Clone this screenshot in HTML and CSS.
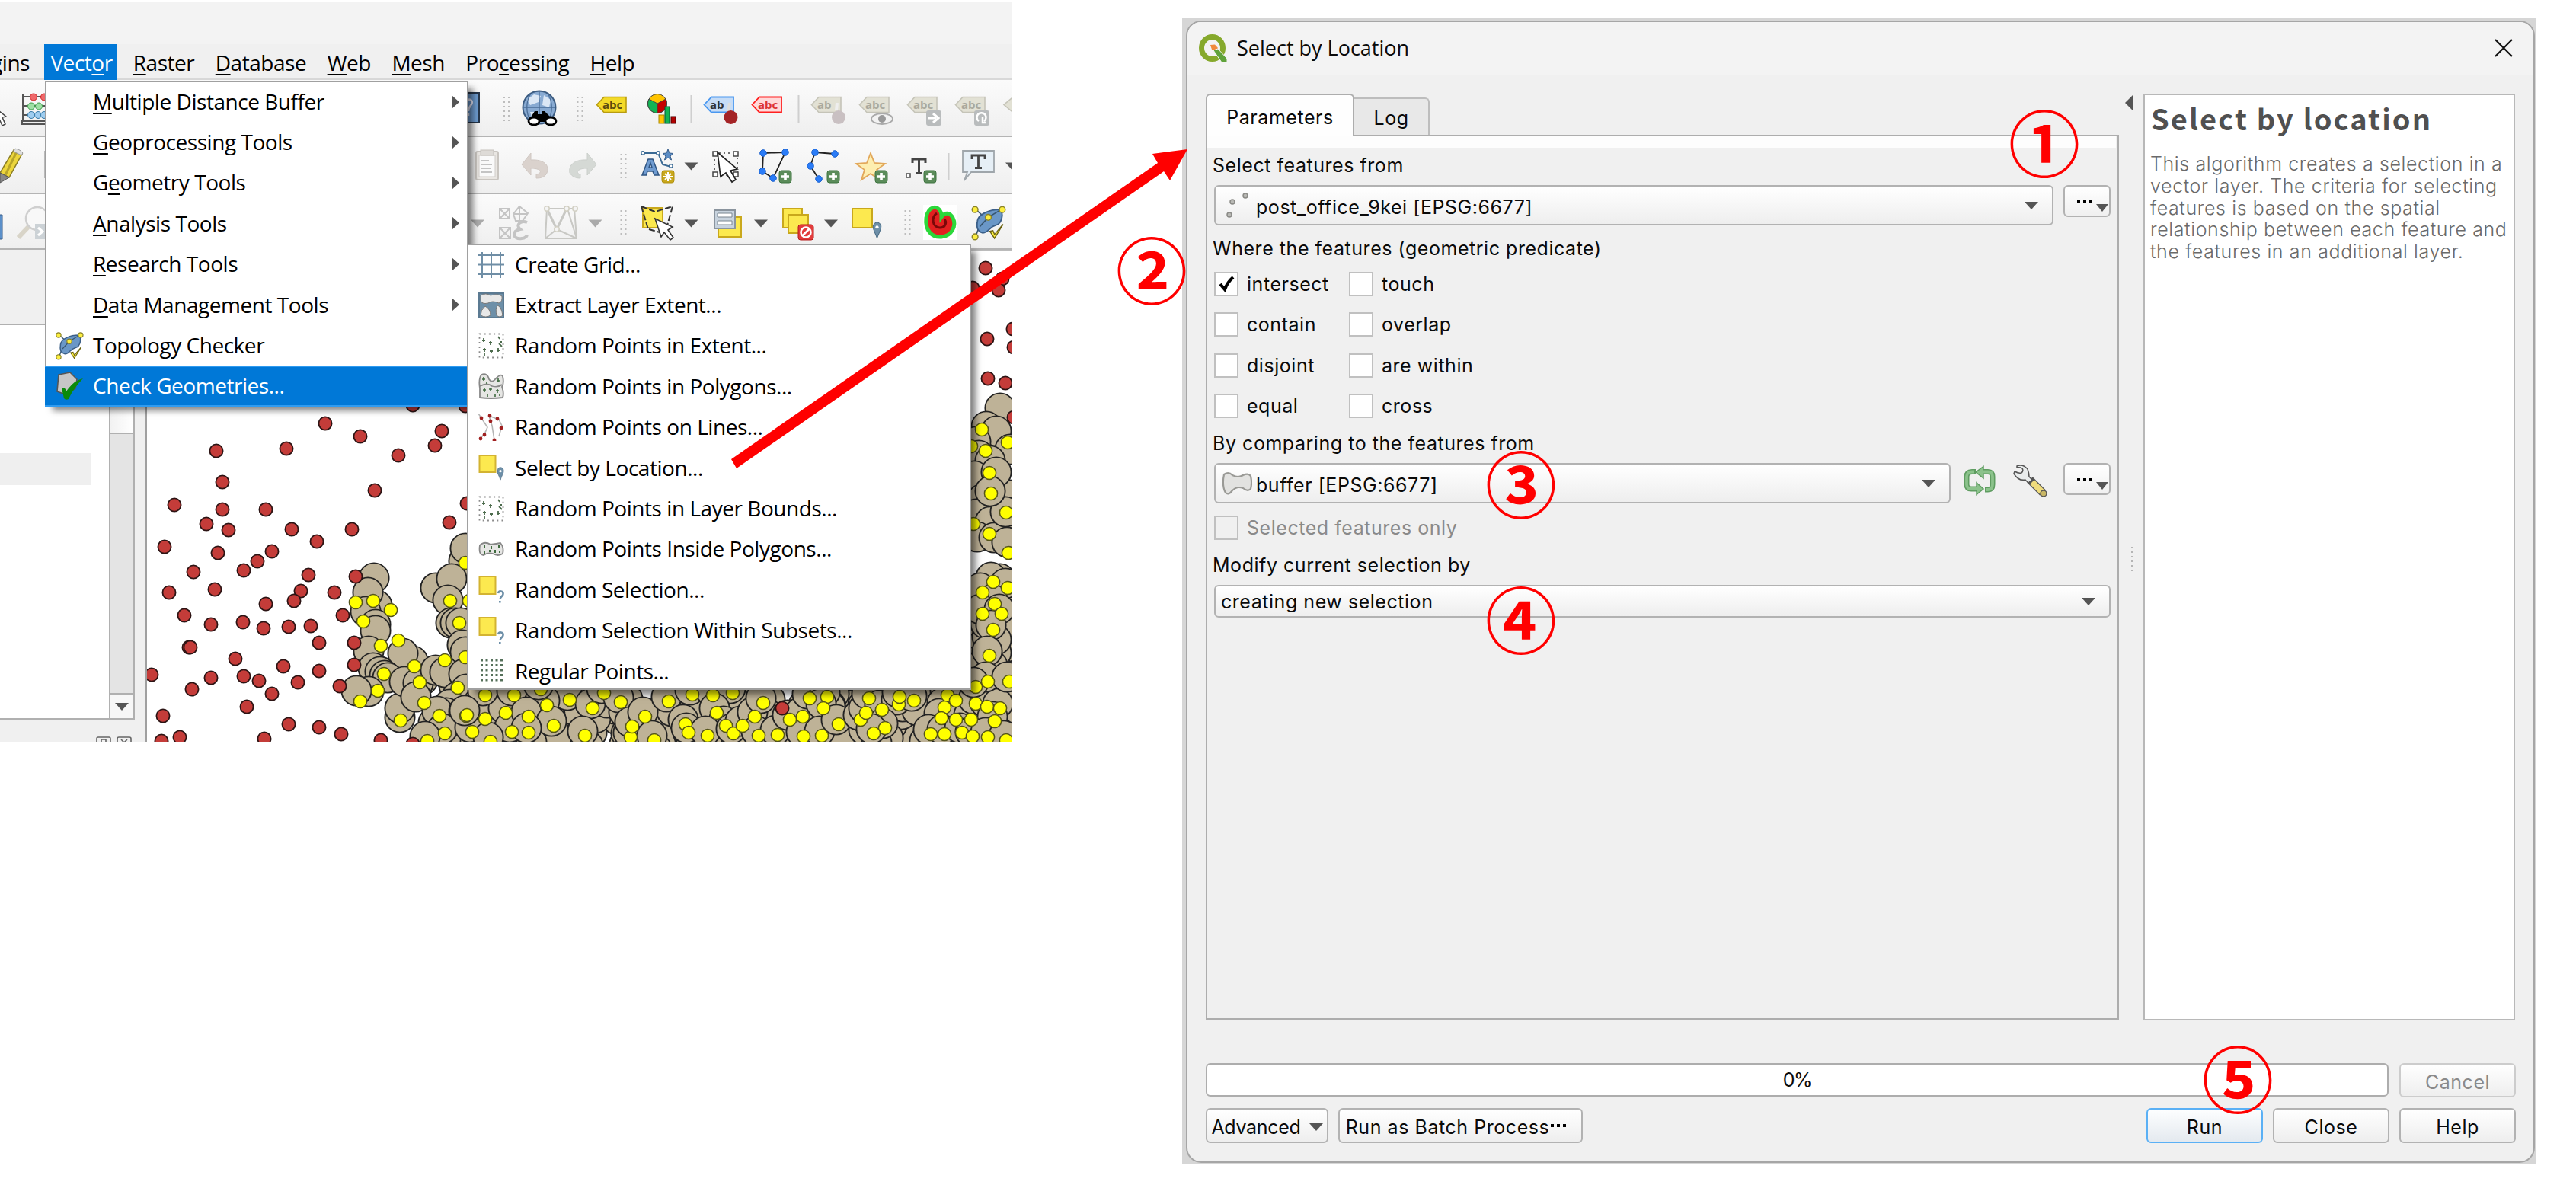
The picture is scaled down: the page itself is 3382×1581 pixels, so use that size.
FILE: index.html
```
<!DOCTYPE html>
<html lang="en">
<head>
<meta charset="utf-8">
<title>Select by Location</title>
<link rel="stylesheet" href="styles.css">
</head>
<body>
<svg class="defs" width="0" height="0">
  <defs>
    <marker id="m-red" markerUnits="userSpaceOnUse" markerWidth="22" markerHeight="22" refX="11" refY="11"><circle cx="11" cy="11" r="8.6" fill="#c43c39" stroke="#2c1414" stroke-width="1.8"/></marker>
    <marker id="m-yel" markerUnits="userSpaceOnUse" markerWidth="22" markerHeight="22" refX="11" refY="11"><circle cx="11" cy="11" r="8.6" fill="#ffff00" stroke="#54541a" stroke-width="1.5"/></marker>
    <marker id="m-buf" markerUnits="userSpaceOnUse" markerWidth="44" markerHeight="44" refX="22" refY="22"><circle cx="22" cy="22" r="19.6" fill="#beb297" stroke="#232323" stroke-width="1.9"/></marker>
    <symbol id="topo" viewBox="0 0 46 46">
      <path d="M7 6 L16 14 M40 5 L23 16 M23 16 L12 26 M12 26 L7 40" fill="none" stroke="#38566e" stroke-width="1.6"/>
      <path d="M9 21 C10 12 24 6 38 6 C43 10 41 24 33 26 C24 28 24 36 16 36 C8 34 8 28 9 21Z" fill="#6a97c7" stroke="#3b5f88" stroke-width="1.8"/>
      <path d="M38 7 L23 16 L12 28" fill="none" stroke="#38566e" stroke-width="1.6"/>
      <path d="M25 34 L29 33 L31 38 L42 25 L31 43 Z" fill="#fcee40" stroke="#6b6210" stroke-width="1.3"/>
      <g fill="#fcee40" stroke="#8a8228" stroke-width="1.4"><circle cx="6" cy="6" r="3.8"/><circle cx="41" cy="6" r="3.8"/><circle cx="23" cy="16" r="3.8"/><circle cx="6" cy="41" r="3.8"/></g>
    </symbol>
    <symbol id="plus" viewBox="0 0 18 18"><rect x="1" y="1" width="16" height="16" rx="3" fill="#5b8c5a" stroke="#3f7440"/><path d="M9 4v10M4 9h10" stroke="#fff" stroke-width="3.6"/></symbol>
    <symbol id="pts-ext" viewBox="0 0 34 34">
      <rect x="1.5" y="1.5" width="31" height="31" fill="none" stroke="#8b8b8b" stroke-width="1.8" stroke-dasharray="2 4.2"/>
      <path d="M7 7v5M5 10h4M16 11v5M14 13h4M26 5l2 3M27 14l4 4M8 20v5M6 22h4M17 22v5M15 24h4M26 20v5M24 23h5M8 27v3M28 12h3" stroke="#4c6b4c" stroke-width="1.8"/>
    </symbol>
    <symbol id="sel-q" viewBox="0 0 34 38"><rect x="1.5" y="2" width="21" height="23" fill="#fce94f" stroke="#d3b331" stroke-width="2"/><path d="M26 24c1-4 7-3 6.500 1c0 3-4 3-4 7M28.300 34v2.500" fill="none" stroke="#6d8fa8" stroke-width="2.600"/></symbol>
    <symbol id="pin" viewBox="0 0 12 22"><path d="M6 21C4 14 1 11 1 6.500A5 5.500 0 0 1 11 6.500C11 11 8 14 6 21Z" fill="#6d8fa8" stroke="#4e7089"/><circle cx="6" cy="7" r="2" fill="#fff"/></symbol>
  </defs>
</svg>

<main class="sheet">
  <section class="qgis">
    <div class="winbar"></div>
    <nav class="menubar">
      <span class="cut">gins</span>
      <span class="open">Vect<u>o</u>r</span>
      <span><u>R</u>aster</span><span><u>D</u>atabase</span><span><u>W</u>eb</span><span><u>M</u>esh</span><span>Pro<u>c</u>essing</span><span><u>H</u>elp</span>
    </nav>

    <div class="toolbar">
      <svg width="614" height="74" viewBox="0 105 614 74">
        <path d="M-6 142 L-6 160 L-1 156 L3 165 L7 163 L3 154 L8 153Z" fill="#fff" stroke="#444" stroke-width="1.5"/>
        <path d="M30 123v37M30 127h40M30 139h40M30 151h40M29 159h40v4h-40z" fill="none" stroke="#555" stroke-width="2"/>
        <g fill="#f0696b" stroke="#c22"><circle cx="44" cy="127.500" r="4.500"/><circle cx="58" cy="127.500" r="4.500"/></g>
        <g fill="#9fe0a5" stroke="#3b9b48"><circle cx="41" cy="139.500" r="4.500"/><circle cx="51" cy="139.500" r="4.500"/></g>
        <g fill="#9fcdf0" stroke="#3a7ca8"><circle cx="41" cy="151" r="4.500"/><circle cx="50" cy="151" r="4.500"/><circle cx="58" cy="151" r="4.500"/></g>
      </svg>
      <svg width="61" height="74" viewBox="614 105 61 74">
        <rect x="600" y="122" width="29" height="39" fill="#6d9bcf" stroke="#26364a" stroke-width="2"/>
        <path d="M612 134c3-6 10-3 7 3c-2 3-4 4-4 9M615 149v3" fill="none" stroke="#eef" stroke-width="2.500"/>
        <path d="M662 127v33M668 127v33" stroke="#bdbdbd" stroke-width="2" stroke-dasharray="2 4"/>
      </svg>
      <svg width="70" height="74" viewBox="675 105 70 74">
        <circle cx="708" cy="141" r="21.500" fill="#88aad2" stroke="#3b5b80" stroke-width="2"/>
        <path d="M692 131l9-7 9 2-3 8-11 4zM714 125l9 6-2 10-9-3zM696 147l8 0 2 9-6 3z" fill="#dbe7f5"/>
        <path d="M687 141h42M708 120v42M697 123c-7 10-7 26 0 36M719 123c7 10 7 26 0 36" fill="none" stroke="#4a6d98" stroke-width="1.300"/>
        <path d="M693 160L702 146H706V150H711V146H715L729 160Z" fill="#000"/>
        <ellipse cx="701" cy="159" rx="7" ry="5" fill="#fff" stroke="#000" stroke-width="2.800"/><ellipse cx="723" cy="159" rx="7" ry="5" fill="#fff" stroke="#000" stroke-width="2.800"/>
      </svg>
      <svg width="95" height="74" viewBox="745 105 95 74">
        <path d="M758.500 127v33M764.500 127v33" stroke="#bdbdbd" stroke-width="2" stroke-dasharray="2 4"/>
        <path d="M793 127.500H822V147.500H793L783.500 137.500Z" fill="#f3da28" stroke="#b89c10" stroke-width="1.600"/>
        <text class="abc" x="791" y="143" fill="#5a4c10">abc</text>
      </svg>
      <svg width="77" height="74" viewBox="840 105 77 74">
        <circle cx="863" cy="136" r="12.500" fill="#ffc400" stroke="#444" stroke-width="1"/>
        <path d="M863 136L852 130A12.500 12.500 0 0 0 863 148.500Z" fill="#12b454" stroke="#444"/><path d="M863 136L874 130A12.500 12.500 0 0 1 863 148.500Z" fill="#c40000" stroke="#444"/>
        <rect x="865" y="151" width="7" height="11" fill="#ffc400" stroke="#a80"/><rect x="873" y="140" width="6" height="22" fill="#12b454" stroke="#053"/><rect x="881" y="153" width="6" height="9" fill="#b00000" stroke="#400"/>
        <path d="M907.500 125v36" stroke="#cfcfcf" stroke-width="2"/>
      </svg>
      <svg width="64" height="74" viewBox="917 105 64 74">
        <path d="M934 127.500H963V147.500H934L924.500 137.500Z" fill="#c6dcf6" stroke="#4a98f0" stroke-width="1.800"/>
        <text class="abc" x="932" y="143" fill="#333">ab</text>
        <path d="M958 135l-2 12" stroke="#ddd" stroke-width="4"/><circle cx="959.500" cy="154" r="9" fill="#a42326"/>
      </svg>
      <svg width="77" height="74" viewBox="981 105 77 74">
        <path d="M997 127.500H1026V147.500H997L987.500 137.500Z" fill="#ffd9d9" stroke="#ff2020" stroke-width="1.800"/>
        <text class="abc" x="995" y="143" fill="#d33">abc</text>
        <path d="M1048.500 125v36" stroke="#cfcfcf" stroke-width="2"/>
      </svg>
      <svg width="271" height="74" viewBox="1058 105 271 74">
        <g fill="#e2e1d4" stroke="#c5c4b8" stroke-width="1.600"><path d="M1075 127.500H1104V147.500H1075L1065.500 137.500Z"/><path d="M1138 127.500H1167V147.500H1138L1128.500 137.500Z"/><path d="M1201 127.500H1230V147.500H1201L1191.500 137.500Z"/><path d="M1264 127.500H1293V147.500H1264L1254.500 137.500Z"/><path d="M1330 127.500L1318 137.500L1330 147.500Z"/></g>
        <g class="abc" fill="#aaa99e"><text x="1073" y="143">ab</text><text x="1136" y="143">abc</text><text x="1199" y="143">abc</text><text x="1262" y="143">abc</text></g>
        <path d="M1099 135l-1 10" stroke="#eee" stroke-width="4"/><circle cx="1101" cy="154" r="9" fill="#c9c0c2"/>
        <ellipse cx="1158" cy="156" rx="14" ry="7" fill="#f2f2f2" stroke="#aaa" stroke-width="2"/><circle cx="1158" cy="156" r="5" fill="#999"/>
        <rect x="1216" y="145" width="20" height="20" rx="3" fill="#b9bcbd"/><path d="M1219 155h10M1225 149l7 6-7 6" stroke="#fff" stroke-width="3" fill="none"/>
        <rect x="1279" y="145" width="20" height="20" rx="3" fill="#b9bcbd"/><path d="M1285 159a6 6 0 1 1 7 0M1290 154v7h5" stroke="#fff" stroke-width="2.500" fill="none"/>
      </svg>
    </div>

    <div class="toolbar">
      <svg width="614" height="74" viewBox="0 179 614 74">
        <path d="M0 226L18 196L29 201L12 232Z" fill="#ecd63d" stroke="#8a7d26" stroke-width="1.500"/><path d="M6 231L22 198" stroke="#b8a52a" stroke-width="3"/><path d="M18 196q2-3 6-1t6 5l-2 3-10-5z" fill="#ddd" stroke="#999"/><path d="M0 226l12 6L0 239z" fill="#888" stroke="#555"/>
        <path d="M64 198h-5v34h5" fill="none" stroke="#bbb" stroke-width="2"/>
      </svg>
      <svg width="61" height="74" viewBox="614 179 61 74">
        <rect x="625" y="198" width="29" height="37" rx="2" fill="#e9e6e2" stroke="#c9c5c0" stroke-width="2"/><path d="M629 203h21v28h-21z" fill="#fafafa" stroke="#d0ccc8"/><rect x="631" y="196" width="17" height="7" fill="#dedbd7" stroke="#c5c1bc"/><path d="M632 210h10M632 215h14M632 220h12M632 225h14" stroke="#c4c4c4" stroke-width="2"/>
      </svg>
      <svg width="130" height="74" viewBox="675 179 130 74">
        <path d="M685 215L697 200V209C714 208 722 216 718 226C716 231 711 233 704 233V228C712 227 712 220 697 220V229Z" fill="#dad2cd" stroke="#d0c8c3"/>
        <path d="M783 215L771 200V209C754 208 746 216 748 226C751 231 756 233 762 233V228C756 227 756 220 771 220V229Z" fill="#d5d9d5" stroke="#cbcfcb"/>
      </svg>
      <svg width="120" height="74" viewBox="805 179 120 74">
        <path d="M815.500 201v33M821.500 201v33" stroke="#bdbdbd" stroke-width="2" stroke-dasharray="2 4"/>
        <path d="M845 200H864L870 215L881 218" fill="none" stroke="#3b6a94" stroke-width="2"/><g fill="#fff" stroke="#3b6a94" stroke-width="1.500"><circle cx="844" cy="200" r="2.200"/><circle cx="864" cy="200" r="2.200"/><circle cx="881" cy="217" r="2.200"/></g>
        <path d="M877 195l2 5 5 .5-4 3.500 1.500 5-4.500-3-4.500 3 1.500-5-4-3.500 5-.5z" fill="#5b8cc4" stroke="#345b88"/>
        <path d="M843 229L851 208H857L865 229H859L857 224H850L848.500 229ZM852 219H856L854 213Z" fill="#6f9bd0" stroke="#2f5583" stroke-width="1.500"/>
        <rect x="869" y="223" width="16" height="16" rx="3" fill="#c9a81c" stroke="#b09010"/><path d="M877 225v12M871 231h12M873 227l8 8M881 227l-8 8" stroke="#fff" stroke-width="2"/>
        <path d="M898.500 212.500h18l-9 10z" fill="#555"/>
      </svg>
      <svg width="65" height="74" viewBox="925 179 65 74">
        <rect x="938" y="200" width="30" height="29" fill="none" stroke="#444" stroke-width="1.600" stroke-dasharray="2 4"/><g fill="#fff" stroke="#444" stroke-width="1.500"><rect x="936" y="198" width="6" height="6"/><rect x="963" y="198" width="6" height="6"/><rect x="936" y="225" width="6" height="6"/><rect x="963" y="225" width="6" height="6"/></g>
        <path d="M942 199L946 231L953 226L961 238L966 235L959 223L968 221Z" fill="#fff" stroke="#222" stroke-width="1.700"/>
      </svg>
      <svg width="65" height="74" viewBox="990 179 65 74">
        <path d="M1002 200L1031 199L1015 233L1001 224Z" fill="none" stroke="#222" stroke-width="1.800"/><g fill="#2a7cf8" stroke="#1a60cc"><circle cx="1002" cy="200" r="4.300"/><circle cx="1031" cy="199" r="4.300"/><circle cx="1015" cy="233" r="4.300"/><circle cx="1001" cy="224" r="4.300"/></g><use href="#plus" x="1022" y="222" width="18" height="18"/>
      </svg>
      <svg width="60" height="74" viewBox="1055 179 60 74">
        <path d="M1096 201L1070 199L1064 217L1075 234" fill="none" stroke="#222" stroke-width="1.800"/><g fill="#2a7cf8" stroke="#1a60cc"><circle cx="1096" cy="201" r="4.300"/><circle cx="1070" cy="199" r="4.300"/><circle cx="1064" cy="217" r="4.300"/><circle cx="1075" cy="234" r="4.300"/></g><use href="#plus" x="1085" y="222" width="18" height="18"/>
      </svg>
      <svg width="65" height="74" viewBox="1115 179 65 74">
        <path d="M1143 200L1148 213L1162 214L1151 222L1155 235L1143 227L1131 235L1135 222L1124 214L1138 213Z" fill="#fdeeb0" stroke="#e2a85a" stroke-width="1.800"/><use href="#plus" x="1148" y="222" width="18" height="18"/>
      </svg>
      <svg width="149" height="74" viewBox="1180 179 149 74">
        <path d="M1198 213V208H1215V213M1206.500 208V226M1202 226.500H1211" fill="none" stroke="#444" stroke-width="3"/><rect x="1190" y="227" width="5" height="5" fill="#fff" stroke="#555" stroke-width="1.600"/><use href="#plus" x="1212" y="222" width="18" height="18"/>
        <path d="M1245.500 200v35" stroke="#cfcfcf" stroke-width="2"/>
        <path d="M1264 197H1305V225H1275L1266 236L1270 225H1264Z" fill="#e6eff6" stroke="#9fa6ab" stroke-width="1.800"/><path d="M1276 208V203H1293V208M1284.500 203V219M1280 219.500H1289" fill="none" stroke="#444" stroke-width="2.800"/>
        <path d="M1320 212.500h18l-9 10z" fill="#555"/>
      </svg>
    </div>

    <div class="toolbar last">
      <svg width="614" height="73" viewBox="0 253 614 73">
        <path d="M-4 281H3V313H-4Z" fill="#5b8fc9" stroke="#345b88"/><path d="M40 294L24 311" stroke="#d8d4c8" stroke-width="6"/><circle cx="49" cy="286" r="15" fill="#f8f8f8" stroke="#cfcfcf" stroke-width="2.500"/><rect x="46" y="293" width="16" height="20" fill="#ccd2d6"/><path d="M50 298l6 5-6 5" fill="none" stroke="#fff" stroke-width="3"/>
      </svg>
      <svg width="91" height="73" viewBox="614 253 91 73">
        <path d="M618 287.500h18l-9 10z" fill="#aaa"/>
        <g fill="none" stroke="#c4c4c4" stroke-width="2"><rect x="656" y="273" width="13" height="13"/><path d="M656 273l13 13M669 273l-13 13"/><rect x="656" y="298" width="14" height="14"/><path d="M656 298l14 14M670 298l-14 14"/><path d="M682 270l11 9-7 10h-9l-3-9zM674 280l19 0M682 270v18"/><path d="M692 291c-8-3-16 3-9 9c-12 2-10 14 2 12c4 0 7-3 7-5" stroke-width="4"/></g>
      </svg>
      <svg width="100" height="73" viewBox="705 253 100 73">
        <g fill="none" stroke="#c8c8c4" stroke-width="2"><path d="M718 273L716 312H757L754 273ZM718 273H754M731 300L716 312M731 300L757 312M745 273L757 312"/><path d="M718 273L731 300L744 273" stroke-width="3"/></g><g fill="#f4f4f4" stroke="#d2d0c4" stroke-width="1.600"><circle cx="718" cy="273" r="3.200"/><circle cx="744" cy="273" r="3.200"/><circle cx="755" cy="273" r="3.200"/><circle cx="731" cy="300" r="3.200"/></g>
        <path d="M772.500 287.500h18l-9 10z" fill="#aaa"/>
      </svg>
      <svg width="120" height="73" viewBox="805 253 120 73">
        <path d="M815.500 275v33M821.500 275v33" stroke="#bdbdbd" stroke-width="2" stroke-dasharray="2 4"/>
        <rect x="844" y="272" width="26" height="26" fill="#fce94f" stroke="#c9a81c" stroke-width="2"/>
        <path d="M842 270L851 300M842 270L860 277L883 270L876 295M852 300L866 304" fill="none" stroke="#333" stroke-width="2" stroke-dasharray="8 3"/>
        <path d="M860 286L868 310L872 304L880 314L884 311L877 301L883 297Z" fill="#fff" stroke="#333" stroke-width="1.600"/>
        <path d="M898.500 287.500h18l-9 10z" fill="#555"/>
      </svg>
      <svg width="92" height="73" viewBox="925 253 92 73">
        <rect x="943" y="284" width="30" height="26" fill="#fce94f" stroke="#c9a81c" stroke-width="2"/><rect x="938" y="275" width="27" height="24" fill="#c8d3de" stroke="#8a949e" stroke-width="2"/><path d="M942 279h19v5h-19zM942 289h19v5h-19z" fill="#fff" stroke="#7b8690"/>
        <path d="M990 287.500h18l-9 10z" fill="#555"/>
      </svg>
      <svg width="93" height="73" viewBox="1017 253 93 73">
        <rect x="1028" y="273" width="25" height="25" fill="#fce94f" stroke="#c9a81c" stroke-width="2"/><rect x="1035" y="281" width="26" height="24" fill="#fce94f" stroke="#c9a81c" stroke-width="2"/><rect x="1048" y="294" width="20" height="20" rx="3" fill="#e23b3b" stroke="#b51d1d"/><circle cx="1058" cy="304" r="6.500" fill="none" stroke="#fff" stroke-width="2.600"/><path d="M1053.500 308.500l9-9" stroke="#fff" stroke-width="2.600"/>
        <path d="M1082 287.500h18l-9 10z" fill="#555"/>
      </svg>
      <svg width="68" height="73" viewBox="1110 253 68 73">
        <rect x="1119" y="273" width="26" height="25" fill="#fce94f" stroke="#c9a81c" stroke-width="2"/><use href="#pin" x="1145" y="290" width="13" height="23"/>
      </svg>
      <svg width="151" height="73" viewBox="1178 253 151 73">
        <path d="M1188.500 275v33M1194.500 275v33" stroke="#bdbdbd" stroke-width="2" stroke-dasharray="2 4"/>
        <rect x="1212" y="268" width="45" height="46" fill="#fff"/><path d="M1236 280C1232 266 1218 270 1216 285C1214 302 1224 311 1236 310C1250 309 1256 295 1251 285C1247 278 1241 277 1236 284Z" fill="#e22020" stroke="#2bd83a" stroke-width="5"/><path d="M1230 279C1222 284 1224 298 1234 298C1242 298 1243 290 1240 287" fill="none" stroke="#7a0808" stroke-width="3"/>
        <use href="#topo" x="1274" y="268" width="47" height="47"/>
      </svg>
    </div>

    <div class="work">
      <aside class="layers">
        <div class="dock-head"></div>
        <div class="tree">
          <div class="rows"><div class="selrow"></div></div>
          <div class="scroll"><div class="track-top"></div><div class="thumb"></div><div class="down"><i class="tri"></i></div></div>
        </div>
        <div class="dock-foot">
          <svg width="50" height="8" viewBox="0 0 50 8"><g fill="none" stroke="#666" stroke-width="1.600"><path d="M1 8V3q0-2 2-2h14q2 0 2 2v5M7 8V4h6v4M28 8V3q0-2 2-2h14q2 0 2 2v5M33 4l4 4M41 4l-4 4"/></g></svg>
        </div>
      </aside>
      <svg class="map" width="1136" height="646" viewBox="193 329 1136 645">
        <defs>
          <path id="dense" d="M577 940L612 940L637 944L664 936L637 913L584 963L620 961L672 961L561 973L644 974L675 913L748 919L718 926L778 930L793 910L815 922L613 939L694 941L727 953L694 962L768 966L710 905L828 968L830 954L847 941L878 921L859 972L900 951L904 962L909 912L936 913L962 910L941 936L953 953L929 966L963 963L975 953L991 941L1002 923L996 966L1021 965L1037 945L1054 941L1063 917L1086 915L1081 930L1055 967L1079 966L1101 951L1130 945L1137 936L1141 917L1158 932L1180 925L1181 915L1200 920L1162 956L1147 963L1244 913L1255 920L1240 929L1236 943L1255 945L1275 945L1281 924L1296 928L1313 930L1306 947L1222 964L1240 964L1263 962L1277 967L1297 968L1321 972M1304 764L1290 778L1323 772L1306 793L1290 806L1315 806L1304 827L1299 861L1297 895L1281 902L1325 895"/>
        </defs>
        <g fill="none">
          <path class="buf" d="M530 862L491 759L495 795L483 778L480 803L493 820L493 828L484 855L542 868L529 858L490 877L499 882L505 887L509 890L484 908L468 907L525 942L525 930L555 893L531 895L549 897L546 915L609 737L611 720L572 772L593 760L588 788L592 818L598 818L605 818L607 847L611 856L572 880L596 900L584 883L609 885L600 915L612 905L570 955L590 925L750 950L810 945L880 950L1000 945L1110 925L1200 945L1210 968L1185 960L1120 968"/>
          <path class="buf" d="M1310 770L1325 810L1280 800L1290 840L1320 850L1276 870L1310 880L1280 900L1322 915"/>
          <use class="buf" href="#dense" x="-8" y="9"/><use class="buf" href="#dense" x="9" y="-4"/><use class="buf" href="#dense" x="4" y="13"/><use class="buf" href="#dense" x="-3" y="-6"/>
          <path class="buf" d="M1313 536L1295 560L1308 566L1281 580L1326 590L1285 598L1300 605L1279 625L1325 650L1290 655L1308 620L1282 675L1300 685L1325 690L1283 705L1305 706L1322 712L1320 672L1300 645"/>
          <path class="yel" d="M467 791L490 789L513 801L477 816L523 841L500 848L544 875L504 885L496 907L473 921L551 896L557 923L526 946L584 867L601 903L591 789L603 818L611 739L611 863L616 789"/>
          <use class="yel" href="#dense"/>
          <path class="yel" d="M1289 564L1323 581L1294 592L1299 621L1301 648L1321 673L1299 701L1278 688L1324 726L1275 586"/>
          <path class="red" d="M427 556L473 573L580 566L571 585L284 592L376 589L523 598L292 633L492 644L229 663L292 669L349 669L271 688L300 696L383 695L462 695L590 686L613 661L416 711L216 718L357 724L286 726L338 737L320 749L254 751L405 755L467 757L395 776L282 774L222 778L439 778L386 789L349 793L450 808L242 808L319 817L277 820L346 825L379 823L408 822L419 844L465 844L248 850L250 850L309 865L372 875L419 881L465 873L199 886L277 890L320 888L340 894L391 896L446 901L252 905L357 911L324 928L214 940L379 951L419 955L448 964L236 968L212 973L347 970L500 972L542 977L542 532L611 533L1294 352L1316 366L1311 381L1277 378L1296 445L1330 432L1331 456L1297 497L1320 503L1331 548L1027 930"/>
        </g>
      </svg>
    </div>

    <div class="menu menu-vector">
      <div class="row"><span class="ic"></span><span><u>M</u>ultiple Distance Buffer</span><i class="sub"></i></div>
      <div class="row"><span class="ic"></span><span><u>G</u>eoprocessing Tools</span><i class="sub"></i></div>
      <div class="row"><span class="ic"></span><span>G<u>e</u>ometry Tools</span><i class="sub"></i></div>
      <div class="row"><span class="ic"></span><span><u>A</u>nalysis Tools</span><i class="sub"></i></div>
      <div class="row"><span class="ic"></span><span><u>R</u>esearch Tools</span><i class="sub"></i></div>
      <div class="row"><span class="ic"></span><span><u>D</u>ata Management Tools</span><i class="sub"></i></div>
      <div class="row"><span class="ic"><svg width="38" height="38"><use href="#topo" width="38" height="38"/></svg></span><span>Topology Checker</span></div>
      <div class="row hot"><span class="ic"><svg width="38" height="38" viewBox="0 0 38 38"><path d="M5 4L20 1L29 10L27 22L14 30L3 26Z" fill="#c6c6c6" stroke="#555" stroke-width="1.600"/><path d="M9 22Q13 19 15 26Q24 12 37 9Q24 22 18 36Q14 38 12 35Z" fill="#0a8a0a"/></svg></span><span>Check Geometries...</span></div>
    </div>

    <div class="menu menu-research">
      <div class="row"><span class="ic"><svg width="34" height="34" viewBox="0 0 34 34"><path d="M5 0v34M17 0v34M29 0v34M0 4h34M0 16.500h34M0 29h34" stroke="#6f8ea6" stroke-width="2"/></svg></span><span>Create Grid...</span></div>
      <div class="row"><span class="ic"><svg width="34" height="34" viewBox="0 0 34 34"><rect x="1" y="1" width="32" height="32" fill="#6d8fa8" stroke="#5b7a92" stroke-width="2"/><path d="M3 4Q10 0 16 4Q26 1 31 5Q32 12 27 14Q18 10 13 14Q4 16 3 10ZM9 18Q16 22 16 30Q10 34 3 30Q3 23 9 18ZM25 17Q30 18 32 30Q28 34 24 30Q22 22 25 17Z" fill="#e8e8e8" stroke="#777"/></svg></span><span>Extract Layer Extent...</span></div>
      <div class="row"><span class="ic"><svg width="34" height="34"><use href="#pts-ext" width="34" height="34"/></svg></span><span>Random Points in Extent...</span></div>
      <div class="row"><span class="ic"><svg width="34" height="34" viewBox="0 0 34 34"><path d="M2 32V20Q0 8 4 2Q12 -1 14 8Q18 14 23 7Q30 0 32 4Q34 14 31 18Q34 26 32 32Q16 34 2 32ZM2 17Q12 12 18 17Q26 19 31 15" fill="#e6e6e4" stroke="#888" stroke-width="1.800"/><path d="M7 5v5M5 8h4M11 11v3M26 7v5M24 10h4M8 20v5M6 22h4M16 19v5M14 21h4M25 21v5M23 23h4M12 27v4M22 27v4M28 27v3" stroke="#3f6b3f" stroke-width="1.600"/></svg></span><span>Random Points in Polygons...</span></div>
      <div class="row"><span class="ic"><svg width="34" height="36" viewBox="0 0 34 36"><path d="M0 0L12 18L8 27L2 33M14 3L18 16L21 35M14 3L27 8L31 16L27 30" fill="none" stroke="#b5b5b5" stroke-width="1.600"/><g fill="#a02020"><circle cx="4" cy="6" r="2.400"/><circle cx="15" cy="3" r="2.400"/><circle cx="16" cy="10" r="2.400"/><circle cx="25" cy="7" r="2.400"/><circle cx="30" cy="19" r="2.400"/><circle cx="8" cy="28" r="2.400"/><circle cx="3" cy="33" r="2.400"/><circle cx="21" cy="35" r="2.400"/></g></svg></span><span>Random Points on Lines...</span></div>
      <div class="row"><span class="ic"><svg width="34" height="34" viewBox="0 0 34 34"><rect x="1.500" y="1" width="21" height="22" fill="#fce94f" stroke="#d3b331" stroke-width="2"/><use href="#pin" x="24" y="16" width="10" height="18"/></svg></span><span>Select by Location...</span></div>
      <div class="row"><span class="ic"><svg width="34" height="34"><use href="#pts-ext" width="34" height="34"/></svg></span><span>Random Points in Layer Bounds...</span></div>
      <div class="row"><span class="ic"><svg width="34" height="20" viewBox="0 0 34 20"><path d="M2 5Q8 -1 16 4Q24 3 29 2Q34 8 32 16Q26 20 19 16Q12 14 7 18Q0 18 2 5Z" fill="#e6e6e4" stroke="#888" stroke-width="1.800"/><path d="M8 4v4M8 12v4M17 6v4M27 5v4M22 11v4M15 11v3M28 12v3" stroke="#3f6b3f" stroke-width="2"/></svg></span><span>Random Points Inside Polygons...</span></div>
      <div class="row"><span class="ic"><svg width="34" height="38"><use href="#sel-q" width="34" height="38"/></svg></span><span>Random Selection...</span></div>
      <div class="row"><span class="ic"><svg width="34" height="38"><use href="#sel-q" width="34" height="38"/></svg></span><span>Random Selection Within Subsets...</span></div>
      <div class="row"><span class="ic"><svg width="34" height="32" viewBox="0 0 34 32"><path d="M3 2h30M3 8.500h30M3 15h30M3 21.500h30M3 28h30" stroke="#55705a" stroke-width="3" stroke-dasharray="3 3.500"/></svg></span><span>Regular Points...</span></div>
    </div>
  </section>

  <section class="shot">
    <div class="dialog">
      <header class="title">
        <svg width="39" height="37" viewBox="0 0 39 37"><ellipse cx="18.500" cy="18" rx="14" ry="14.500" fill="none" stroke="#86a92c" stroke-width="7"/><path d="M16 14L22 13.500L26 18L24 22L18 20Z" fill="#f08a3c"/><path d="M20 21L26 19L38 32V37H31Z" fill="#5fa23a" stroke="#f3f3f3" stroke-width="1"/></svg>
        <h1>Select by Location</h1>
        <svg class="x" width="24" height="24" viewBox="0 0 24 24"><path d="M1 1L23 23M23 1L1 23" stroke="#111" stroke-width="2.200"/></svg>
      </header>
      <div class="content">
        <div class="main">
          <div class="tabs">
            <div class="tabbar"><div class="tab on">Parameters</div><div class="tab">Log</div></div>
            <div class="pane">
              <div class="strip"></div>
              <div class="form">
                <div class="lbl">Select features from</div>
                <div class="line">
                  <div class="combo tall"><svg width="40" height="36" viewBox="0 0 40 36"><g fill="#b9b9b5" stroke="#8a8a86" stroke-width="1.500"><circle cx="31" cy="5" r="3"/><circle cx="14" cy="13" r="3"/><circle cx="10" cy="30" r="3"/></g></svg><span>post_office_9kei [EPSG:6677]</span><i class="tri"></i></div>
                  <div class="more"><b></b><i class="tri"></i></div>
                </div>
                <div class="lbl where">Where the features (geometric predicate)</div>
                <div class="checks">
                  <div class="ck"><i class="box"><svg width="28" height="27" viewBox="0 0 28 27"><path d="M6 14L12 21Q15 12 23 5" fill="none" stroke="#000" stroke-width="4.200"/></svg></i>intersect</div><div class="ck"><i class="box"></i>touch</div>
                  <div class="ck"><i class="box"></i>contain</div><div class="ck"><i class="box"></i>overlap</div>
                  <div class="ck"><i class="box"></i>disjoint</div><div class="ck"><i class="box"></i>are within</div>
                  <div class="ck"><i class="box"></i>equal</div><div class="ck"><i class="box"></i>cross</div>
                </div>
                <div class="lbl by">By comparing to the features from</div>
                <div class="line">
                  <div class="combo tall"><svg width="40" height="30" viewBox="0 0 40 30"><path d="M3 3Q9 -1 14 4Q22 8 28 4Q35 1 38 5Q40 14 38 22Q34 26 28 21Q20 18 14 24Q9 31 5 27Q0 18 3 3Z" fill="#e2e2e0" stroke="#9a9a96" stroke-width="2.200"/></svg><span>buffer [EPSG:6677]</span><i class="tri"></i></div>
                  <svg class="tool" width="44" height="44" viewBox="0 0 44 44"><path d="M17 8.500H12Q5 8.500 5 15V25Q5 31 11 31H20M27 8.500H33Q39 8.500 39 15V25Q39 32 33 32H29" fill="none" stroke="#5f9d61" stroke-width="7"/><path d="M27 1.500L17 9L27 17ZM18 23V38.500L27 31Z" fill="#8bc28b" stroke="#5f9d61" stroke-width="1.500"/><path d="M15 8.500H12Q5 8.500 5 15V25Q5 31 11 31H20M25 8.500H33Q39 8.500 39 15V25Q39 32 33 32H31" fill="none" stroke="#8bc28b" stroke-width="3.800"/></svg>
                  <svg class="tool" width="48" height="46" viewBox="0 0 48 46"><path d="M23 21L40 38" stroke="#555" stroke-width="10.500"/><path d="M26 24L40 38" stroke="#f0dc7c" stroke-width="8"/><circle cx="41" cy="39" r="4" fill="#c9b766" stroke="#555" stroke-width="1.500"/><path d="M6 3Q14 0 20 7Q22 12 22 17L26 21L21 25L17 21Q8 23 2 13L3 10Q8 13 12 12Q15 9 13 6Q10 4 6 5Z" fill="#e9ecec" stroke="#555" stroke-width="1.500"/></svg>
                  <div class="more"><b></b><i class="tri"></i></div>
                </div>
                <div class="ck off"><i class="box"></i>Selected features only</div>
                <div class="lbl mod">Modify current selection by</div>
                <div class="combo short"><span>creating new selection</span><i class="tri"></i></div>
              </div>
            </div>
          </div>
          <div class="split"><i class="collapse"></i><i class="grip"></i></div>
          <article class="help">
            <h2>Select by location</h2>
            <p>This algorithm creates a selection in a<br>vector layer. The criteria for selecting<br>features is based on the spatial<br>relationship between each feature and<br>the features in an additional layer.</p>
          </article>
        </div>
        <div class="foot prog"><div class="progress">0%</div><div class="btn w dim">Cancel</div></div>
        <div class="foot"><div class="btn adv">Advanced<i class="tri"></i></div><div class="btn batch">Run as Batch Process<b></b></div><div class="fill"></div><div class="btn w run">Run</div><div class="btn w">Close</div><div class="btn w">Help</div></div>
      </div>
    </div>
  </section>

  <svg class="arrow" width="620" height="440" viewBox="950 185 620 440"><path d="M960 603L1520 214L1513 202L1559 196L1536 237L1528 225L967 615Z" fill="#f00"/></svg>
  <span class="num n1">①</span><span class="num n2">②</span><span class="num n3">③</span><span class="num n4">④</span><span class="num n5">⑤</span>
</main>
</body>
</html>
```
FILE: styles.css
```
* { box-sizing: border-box; }
body { margin: 0; background: #fff; }
.defs { position: absolute; }
.sheet { position: relative; width: 3382px; height: 1581px; overflow: hidden; display: flex; align-items: flex-start; }
svg { display: block; flex: none; }

/* main window */
.qgis { position: relative; width: 1329px; height: 974px; padding-top: 3px; overflow: hidden; display: flex; flex-direction: column; font: 28px/53.4px "Open Sans", sans-serif; letter-spacing: -0.46px; color: #000; flex: none; }
.winbar { height: 55px; background: #f3f3f3; }
.menubar { height: 47px; background: #f0f0f0; display: flex; gap: 27.4px; line-height: 49px; border-bottom: 2px solid #d8d8d8; white-space: nowrap; }
.menubar .cut { width: 39px; display: flex; justify-content: flex-end; }
.menubar .open { margin-left: -8px; margin-right: -6px; width: 95px; height: 48px; padding-left: 8px; background: #0078d7; color: #fff; }
u { text-decoration-thickness: 2px; text-underline-offset: 4px; }
.toolbar { height: 75px; display: flex; align-items: center; background: linear-gradient(#fbfbfb, #efefef); border-bottom: 2px solid #b4b4b4; }
.toolbar.last { height: 73px; }
.abc { font: bold 15px "Open Sans", sans-serif; letter-spacing: 0; }
.work { flex: 1; display: flex; min-height: 0; }
.layers { width: 193px; background: #f0f0f0; border-right: 2px solid #a0a0a0; display: flex; flex-direction: column; }
.dock-head { height: 97px; }
.tree { height: 520px; width: 177px; background: #fff; border: 2px solid #b0b0b0; border-left: 0; display: flex; }
.rows { width: 143px; padding-top: 168px; }
.selrow { width: 120px; height: 42px; background: #efefef; }
.scroll { width: 32px; border-left: 2px solid #b0b0b0; background: #f7f7f7; display: flex; flex-direction: column; }
.track-top { height: 141px; background: linear-gradient(90deg, #f2f2f2, #fff); }
.thumb { flex: 1; background: #e4e4e4; border: solid #b0b0b0; border-width: 2px 0; }
.down { height: 31px; display: flex; justify-content: center; align-items: center; }
.dock-foot { flex: 1; padding: 22px 0 0 126px; overflow: hidden; }
.map { background: #fff; border-top: 1px solid #bbb; }
.buf { marker: url(#m-buf); }
.yel { marker: url(#m-yel); }
.red { marker: url(#m-red); }

.menu { position: absolute; background: #fff; border: 2px solid #a0a0a0; box-shadow: 8px 8px 8px -2px rgba(0, 0, 0, .5); white-space: nowrap; }
.menu-vector { left: 59px; top: 106px; width: 556px; height: 427px; }
.menu-research { left: 613px; top: 320px; width: 662px; height: 586px; }
.row { height: 53.4px; display: flex; align-items: center; margin-right: -1px; }
.menu-vector .row:first-child { height: 52px; }
.menu-research .row:first-child { height: 52px; }
.ic { width: 61px; padding-left: 11px; flex: none; }
.menu-research .ic { width: 61px; padding-left: 13px; }
.sub { margin: 0 11px 0 auto; border: solid transparent; border-width: 9px 0 9px 10px; border-left-color: #555; }
.hot { background: #0078d7; color: #fff; margin: 0 -1px 0 -2px; padding-left: 2px; border: 2px solid #2f9bf0; border-width: 2px 0; }

/* dialog */
.shot { margin: 24px 0 0 223px; width: 1778px; height: 1504px; padding: 3px 2px 1px 5px; background: #d6d6d6; flex: none; }
.dialog { height: 1500px; border: 2px solid #a6a6a6; border-radius: 20px; background: #f0f0f0; overflow: hidden; font: 25px/30px Inter, sans-serif; letter-spacing: .54px; color: #0a0a0a; }
.title { height: 69px; background: #f3f3f3; display: flex; align-items: center; padding: 0 27px 0 14px; }
.title h1 { font: 27px/40px "Open Sans", sans-serif; letter-spacing: 0; margin: -1px auto 0 12px; }
.title .x { margin-top: -2px; }
.content { padding: 25px 23px 0 24px; }
.main { height: 1217px; display: flex; }
.tabs { width: 1199px; display: flex; flex-direction: column; }
.tabbar { height: 54px; display: flex; align-items: flex-end; }
.tab { width: 99px; height: 49px; border: 2px solid #bdbdbd; border-left: 0; border-bottom: 0; border-radius: 0 6px 0 0; background: #e8e8e8; display: flex; align-items: center; justify-content: center; padding-top: 2px; }
.tab.on { position: relative; width: 195px; height: 56px; margin-bottom: -2px; background: #fefefe; border: 2px solid #adadad; border-bottom: 0; border-radius: 6px 6px 0 0; padding-top: 4px; }
.pane { height: 1162px; border: 2px solid #adadad; }
.strip { height: 15px; margin-right: 2px; background: #fdfdfd; }
.form { padding: 8px 9px 0 9px; display: flex; flex-direction: column; }
.lbl { margin-left: -2px; }
.line { display: flex; align-items: flex-start; gap: 13px; margin-top: 11px; }
.combo { flex: 1; display: flex; align-items: center; border: 2px solid #b2b2b2; border-radius: 6px; background: linear-gradient(#fff, #eee); padding-right: 18px; }
.combo.tall { height: 53px; padding-left: 8px; gap: 5px; }
.combo.tall span { padding-top: 4px; }
.combo.short { flex: none; height: 43px; margin-top: 11px; padding-left: 7px; }
.combo span { margin-right: auto; }
.tri { border: solid transparent; border-width: 10px 9px 0; border-top-color: #555; }
.more { width: 62px; height: 42px; border: 2px solid #b2b2b2; border-radius: 6px; background: linear-gradient(#fff, #f0f0f0); display: flex; padding: 18px 0 0 16px; }
.more b, .batch b { width: 20px; height: 4px; background: repeating-linear-gradient(90deg, #000 0 4px, transparent 4px 8px); flex: none; }
.more .tri { margin: 5px 0 0 5px; border-width: 10px 8px 0; align-self: flex-start; }
.where { margin-top: 15px; }
.checks { display: grid; grid-template-columns: 177px 300px; grid-auto-rows: 53.4px; margin-top: 16px; height: 192px; }
.ck { display: flex; align-items: center; height: 32px; gap: 11px; }
.box { width: 32px; height: 32px; border: 2px solid #c0c0c0; background: #fff; flex: none; }
.by { margin-top: 18px; }
.tool { margin: 3px 0 0 3px; }
.tool + .tool { margin: 1px 6px 0 8px; }
.off { margin-top: 16px; color: #8a8a8a; }
.off .box { background: #f0f0f0; }
.mod { margin-top: 18px; }
.split { width: 32px; display: flex; flex-direction: column; align-items: center; }
.collapse { margin: 2px 6px 0 0; border: solid transparent; border-width: 10px 10px 10px 0; border-right-color: #555; }
.grip { margin: 573px 0 0 2px; width: 3px; height: 32px; background: repeating-linear-gradient(#b5b5b5 0 2px, transparent 2px 6px); }
.help { width: 488px; height: 1217px; background: #fff; border: 2px solid #b8b8b8; padding: 6px 0 0 7px; color: #6a6a6a; white-space: nowrap; font-weight: 300; letter-spacing: .62px; }
.help h2 { margin: 0 0 22px 1px; font: bold 38px/48px "Noto Sans CJK JP", sans-serif; letter-spacing: 2.1px; color: #505050; }
.help p { margin: 0; line-height: 28.8px; }
.foot { display: flex; gap: 13px; margin-top: 14px; }
.foot.prog { margin-top: 56px; height: 45px; gap: 14px; }
.progress { flex: 1; height: 44px; border: 2px solid #adadad; border-radius: 6px; background: #fff; display: flex; align-items: center; justify-content: center; letter-spacing: -1.5px; }
.btn { height: 46px; border: 2px solid #b2b2b2; border-radius: 6px; background: linear-gradient(#fff, #eee); display: flex; align-items: center; justify-content: center; padding-top: 4px; }
.foot .w { width: 153px; }
.adv { width: 161px; gap: 11px; letter-spacing: -.3px; }
.batch { width: 321px; letter-spacing: .55px; }
.batch b { margin: -4px 12px 0 2px; }
.fill { flex: 1; }
.dim { color: #8a8a8a; border-color: #ccc; height: 45px; }
.run { border-color: #5ab0f5; background: linear-gradient(#fdfeff, #e4e9ef); }

/* annotations */
.arrow { position: absolute; left: 950px; top: 185px; }
.num { position: absolute; width: 94px; height: 94px; font: bold 94px/94px "Noto Sans CJK JP", sans-serif; color: #f00; }
.n1 { left: 2637px; top: 137px; }
.n2 { left: 1465px; top: 304px; }
.n3 { left: 1950px; top: 585px; }
.n4 { left: 1950px; top: 763px; }
.n5 { left: 2891px; top: 1366px; }
```
